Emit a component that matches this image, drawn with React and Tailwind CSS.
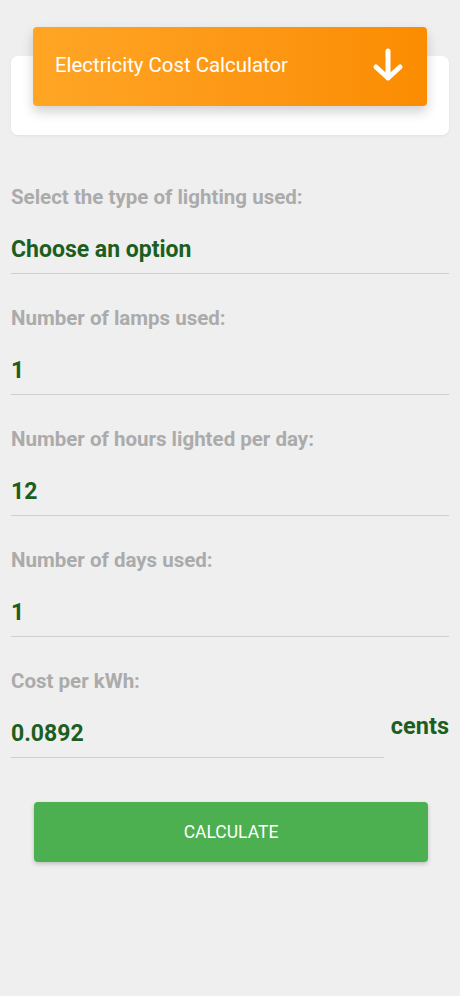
import React from "react";

const fields = [
  { label: "Select the type of lighting used:", value: "Choose an option" },
  { label: "Number of lamps used:", value: "1" },
  { label: "Number of hours lighted per day:", value: "12" },
  { label: "Number of days used:", value: "1" },
];

const Field = ({ label, value }) => (
  <div className="flex flex-col">
    <div className="h-[24px] leading-[24px] text-[20.5px] font-bold text-[#ababab]">{label}</div>
    <div className="mt-[18px] h-[47px] flex items-center border-b border-[#cfcfcf] text-[23px] font-bold text-[#1b5e20]">
      {value}
    </div>
  </div>
);

const App = () => {
  return (
    <div
      className="min-h-[996px] w-[460px] bg-[#efefef] px-[11px] pt-[27px]"
      style={{ fontFamily: "Roboto, 'Noto Sans', sans-serif" }}
    >
      {/* HEADER */}
      <div className="relative z-10 mx-[22px] h-[79px] rounded-[4px] bg-gradient-to-r from-[#ffa524] to-[#fb8c00] shadow-[0_6px_12px_rgba(0,0,0,0.18)] flex items-center justify-between pl-[22px] pr-[22px]">
        <span className="text-white text-[20.4px] -mt-[2px]">Electricity Cost Calculator</span>
        <svg width="34" height="36" viewBox="0 0 34 36" className="-mt-[4px]">
          <path
            d="M17 4 V31 M5 20 L17 31 L29 20"
            fill="none"
            stroke="#fff"
            strokeWidth="5"
            strokeLinecap="round"
            strokeLinejoin="round"
          />
        </svg>
      </div>
      <div className="-mt-[50px] h-[79px] rounded-[7px] bg-white shadow-[0_1px_3px_rgba(0,0,0,0.06)]"></div>

      {/* FORM */}
      <div className="mt-[50px] flex flex-col gap-[32px]">
        {fields.map((f) => (
          <Field key={f.label} label={f.label} value={f.value} />
        ))}
        <div className="flex flex-col">
          <div className="h-[24px] leading-[24px] text-[20.5px] font-bold text-[#ababab]">Cost per kWh:</div>
          <div className="mt-[18px] flex">
            <div className="w-[373px] h-[47px] flex items-center border-b border-[#cfcfcf] text-[23px] font-bold text-[#1b5e20]">
              0.0892
            </div>
            <div className="ml-auto -mt-[2px] text-[23.5px] font-bold text-[#1b5e20]">cents</div>
          </div>
        </div>
      </div>

      {/* CALCULATE */}
      <button className="mt-[44px] mx-[23px] w-[394px] h-[60px] rounded-[4px] bg-[#4caf50] text-white text-[17.5px] shadow-[0_2px_4px_rgba(0,0,0,0.2)]">
        CALCULATE
      </button>
    </div>
  );
};

export default App;
